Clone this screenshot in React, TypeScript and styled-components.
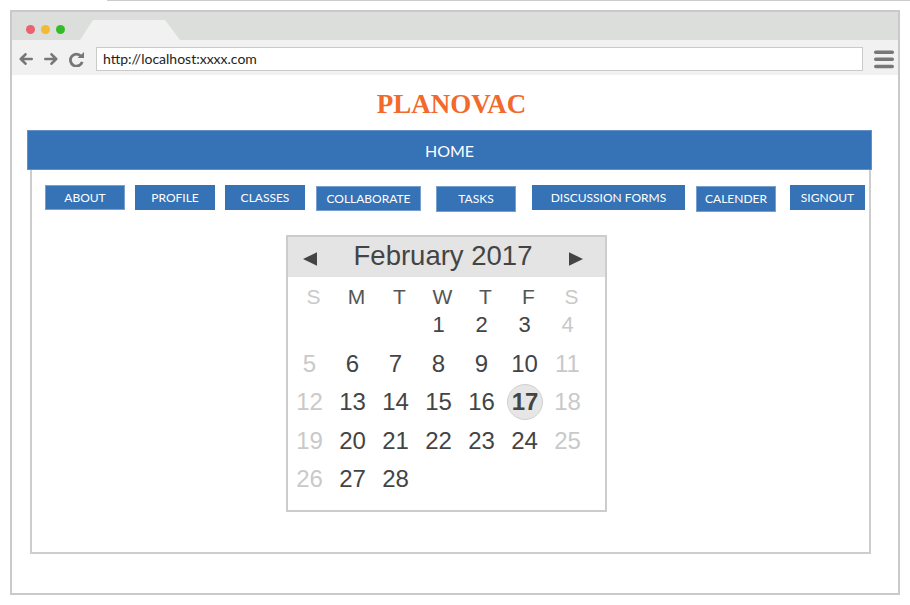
import React from 'react';
import styled, { createGlobalStyle } from 'styled-components';

const Global = createGlobalStyle`
  html, body { margin: 0; padding: 0; background: #fff; }
  body { font-family: Lato, "Liberation Sans", sans-serif; }
`;

const Page = styled.div`
  width: 910px;
  height: 605px;
  overflow: hidden;
  background: #fff;
`;

const TopRule = styled.div`
  height: 1px;
  margin-left: 107px;
  background: #cbcbcb;
`;

const Window = styled.div`
  box-sizing: border-box;
  width: 890px;
  height: 585px;
  margin: 9px 0 0 10px;
  border: 2px solid #c9c9c9;
  display: flex;
  flex-direction: column;
  background: #fff;
`;

const TabBar = styled.div`
  height: 28px;
  flex-shrink: 0;
  background: #dcdedb;
  display: flex;
  align-items: flex-end;
`;

const Dots = styled.div`
  display: flex;
  gap: 6px;
  align-self: flex-start;
  margin: 12.5px 0 0 14px;
`;

const Dot = styled.span<{ $c: string }>`
  width: 9px;
  height: 9px;
  border-radius: 50%;
  background: ${(p) => p.$c};
`;

const Tab = styled.div`
  width: 100px;
  height: 20px;
  margin-left: 15px;
  background: #f1f1f1;
  clip-path: polygon(13px 0, 85px 0, 100% 100%, 0 100%);
`;

const Toolbar = styled.div`
  height: 35px;
  flex-shrink: 0;
  box-sizing: border-box;
  padding: 3px 0 0 7px;
  background: #f1f1f1;
  display: flex;
  align-items: center;
`;

const ToolIcon = styled.svg<{ $ml?: number }>`
  flex-shrink: 0;
  margin-left: ${(p) => p.$ml ?? 0}px;
  display: block;
`;

const UrlBox = styled.div`
  box-sizing: border-box;
  width: 767px;
  height: 24px;
  margin-left: 12px;
  border: 1px solid #cacaca;
  background: #fff;
  padding-left: 6px;
  font-family: Lato, "Liberation Sans", sans-serif;
  font-size: 14px;
  line-height: 22px;
  color: #222;
`;

const Content = styled.div`
  flex: 1;
  padding: 14px 26px 0 15px;
  display: flex;
  flex-direction: column;
`;

const Title = styled.h1`
  margin: 0;
  padding-left: 4px;
  font-family: "Liberation Serif", "Times New Roman", serif;
  font-weight: 700;
  font-size: 27px;
  line-height: 30px;
  color: #f26a2b;
  text-align: center;
`;

const NavBar = styled.div`
  box-sizing: border-box;
  margin-top: 11px;
  height: 40px;
  background: #3572b6;
  border: 1px solid #6490c6;
  display: flex;
  align-items: center;
  justify-content: center;
  color: #fff;
  font-family: Lato, "Liberation Sans", sans-serif;
  font-size: 16px;
`;

const Panel = styled.div`
  box-sizing: border-box;
  height: 384px;
  margin: 0 1px 0 3px;
  border: 2px solid #cdcdcd;
  border-top: none;
  padding-top: 15px;
  display: flex;
  flex-direction: column;
  align-items: flex-start;
`;

const ButtonRow = styled.div`
  display: flex;
  align-items: flex-start;
  height: 27px;
  padding-left: 13px;
`;

const NavButton = styled.button<{ $w: number; $ml: number; $mt: number; $h: number; $edge?: boolean }>`
  box-sizing: border-box;
  width: ${(p) => p.$w}px;
  height: ${(p) => p.$h}px;
  margin: ${(p) => p.$mt}px 0 0 ${(p) => p.$ml}px;
  padding: 0;
  background: #3572b6;
  border: 1px solid ${(p) => (p.$edge ? '#77a0d0' : '#3572b6')};
  color: #fff;
  font-family: Lato, "Liberation Sans", sans-serif;
  font-size: 12px;
  line-height: 1;
  text-transform: uppercase;
  display: flex;
  align-items: center;
  justify-content: center;
  cursor: pointer;
`;

const Calendar = styled.div`
  box-sizing: border-box;
  width: 321px;
  height: 277px;
  margin: 23px 0 0 254px;
  border: 2px solid #cccccc;
  font-family: "Liberation Sans", Arial, sans-serif;
`;

const CalHeader = styled.div`
  height: 40px;
  box-sizing: border-box;
  padding: 0 22px 3px 15px;
  background: #e4e4e4;
  display: flex;
  align-items: center;
  justify-content: space-between;
`;

const Arrow = styled.svg`
  display: block;
  margin-top: 6px;
  flex-shrink: 0;
`;

const MonthTitle = styled.div`
  font-size: 27.5px;
  line-height: 28px;
  color: #444;
`;

const WeekRow = styled.div`
  display: grid;
  grid-template-columns: repeat(7, 43px);
  margin-top: 6px;
  padding-left: 4px;
  height: 28px;
`;

const WeekDay = styled.div<{ $weekend: boolean }>`
  text-align: center;
  font-size: 21px;
  line-height: 28px;
  color: ${(p) => (p.$weekend ? '#c9c9c9' : '#555')};
`;

const DateGrid = styled.div`
  display: grid;
  grid-template-columns: repeat(7, 43px);
  grid-auto-rows: 28px;
  row-gap: 10.5px;
`;

const DateCell = styled.div<{ $weekend: boolean; $size: number }>`
  display: flex;
  align-items: center;
  justify-content: center;
  font-size: ${(p) => p.$size}px;
  line-height: 28px;
  color: ${(p) => (p.$weekend ? '#c9c9c9' : '#444')};
`;

const Selected = styled.span`
  box-sizing: border-box;
  flex-shrink: 0;
  width: 36px;
  height: 36px;
  border-radius: 50%;
  background: #e6e6e6;
  border: 1px solid #d0d0d0;
  display: flex;
  align-items: center;
  justify-content: center;
  font-weight: 700;
  color: #444;
  margin-left: 1px;
`;

const buttons = [
  { label: 'About', w: 80, ml: 0, mt: 0, h: 25, edge: true },
  { label: 'Profile', w: 80, ml: 10, mt: 0, h: 25 },
  { label: 'Classes', w: 80, ml: 10, mt: 0, h: 25 },
  { label: 'Collaborate', w: 105, ml: 11, mt: 1, h: 25, edge: true },
  { label: 'Tasks', w: 80, ml: 15, mt: 1, h: 26, edge: true },
  { label: 'Discussion Forms', w: 153, ml: 16, mt: 0, h: 25 },
  { label: 'Calender', w: 80, ml: 11, mt: 1, h: 26, edge: true },
  { label: 'Signout', w: 75, ml: 14, mt: 0, h: 25 },
];

const weekdays = ['S', 'M', 'T', 'W', 'T', 'F', 'S'];

const weeks: (number | null)[][] = [
  [null, null, null, 1, 2, 3, 4],
  [5, 6, 7, 8, 9, 10, 11],
  [12, 13, 14, 15, 16, 17, 18],
  [19, 20, 21, 22, 23, 24, 25],
  [26, 27, 28, null, null, null, null],
];

const SELECTED_DAY = 17;

export default function App() {
  return (
    <Page>
      <Global />
      <TopRule />
      <Window>
        <TabBar>
          <Dots>
            <Dot $c="#ea6170" />
            <Dot $c="#f0ba33" />
            <Dot $c="#34bc28" />
          </Dots>
          <Tab />
        </TabBar>
        <Toolbar>
          <ToolIcon width="14" height="12" viewBox="0 0 14 12">
            <path d="M12.7 6 H1.8 M6.5 1.3 L1.8 6 L6.5 10.7" fill="none" stroke="#777" strokeWidth="2.6" strokeLinecap="round" strokeLinejoin="round" />
          </ToolIcon>
          <ToolIcon $ml={11} width="14" height="12" viewBox="0 0 14 12">
            <path d="M1.3 6 H12.2 M7.5 1.3 L12.2 6 L7.5 10.7" fill="none" stroke="#777" strokeWidth="2.6" strokeLinecap="round" strokeLinejoin="round" />
          </ToolIcon>
          <ToolIcon $ml={11} width="15" height="15" viewBox="0 0 15 15">
            <path d="M12 4.2 A6 6 0 1 0 13.2 9.8" fill="none" stroke="#777" strokeWidth="2.8" strokeLinecap="butt" />
            <polygon points="8.6,6 15,6 15,0" fill="#777" />
          </ToolIcon>
          <UrlBox>http://localhost:xxxx.com</UrlBox>
          <ToolIcon $ml={11} width="20" height="19" viewBox="0 0 20 19">
            <rect x="0" y="0.5" width="20" height="3.4" rx="1.7" fill="#777" />
            <rect x="0" y="7.5" width="20" height="3.4" rx="1.7" fill="#777" />
            <rect x="0" y="14.8" width="20" height="3.4" rx="1.7" fill="#777" />
          </ToolIcon>
        </Toolbar>
        <Content>
          <Title>PLANOVAC</Title>
          <NavBar>HOME</NavBar>
          <Panel>
            <ButtonRow>
              {buttons.map((b) => (
                <NavButton key={b.label} $w={b.w} $ml={b.ml} $mt={b.mt} $h={b.h} $edge={b.edge}>
                  {b.label}
                </NavButton>
              ))}
            </ButtonRow>
            <Calendar>
              <CalHeader>
                <Arrow width="14" height="14" viewBox="0 0 14 14">
                  <polygon points="0,7 14,0.3 14,13.7" fill="#444" />
                </Arrow>
                <MonthTitle>February 2017</MonthTitle>
                <Arrow width="14" height="14" viewBox="0 0 14 14">
                  <polygon points="14,7 0,0.3 0,13.7" fill="#444" />
                </Arrow>
              </CalHeader>
              <WeekRow>
                {weekdays.map((d, i) => (
                  <WeekDay key={i} $weekend={i === 0 || i === 6}>
                    {d}
                  </WeekDay>
                ))}
              </WeekRow>
              <DateGrid>
                {weeks.map((week, wi) =>
                  week.map((day, di) => (
                    <DateCell key={`${wi}-${di}`} $weekend={di === 0 || di === 6} $size={wi === 0 ? 22 : 24}>
                      {day === SELECTED_DAY ? <Selected>{day}</Selected> : day ?? ''}
                    </DateCell>
                  ))
                )}
              </DateGrid>
            </Calendar>
          </Panel>
        </Content>
      </Window>
    </Page>
  );
}
